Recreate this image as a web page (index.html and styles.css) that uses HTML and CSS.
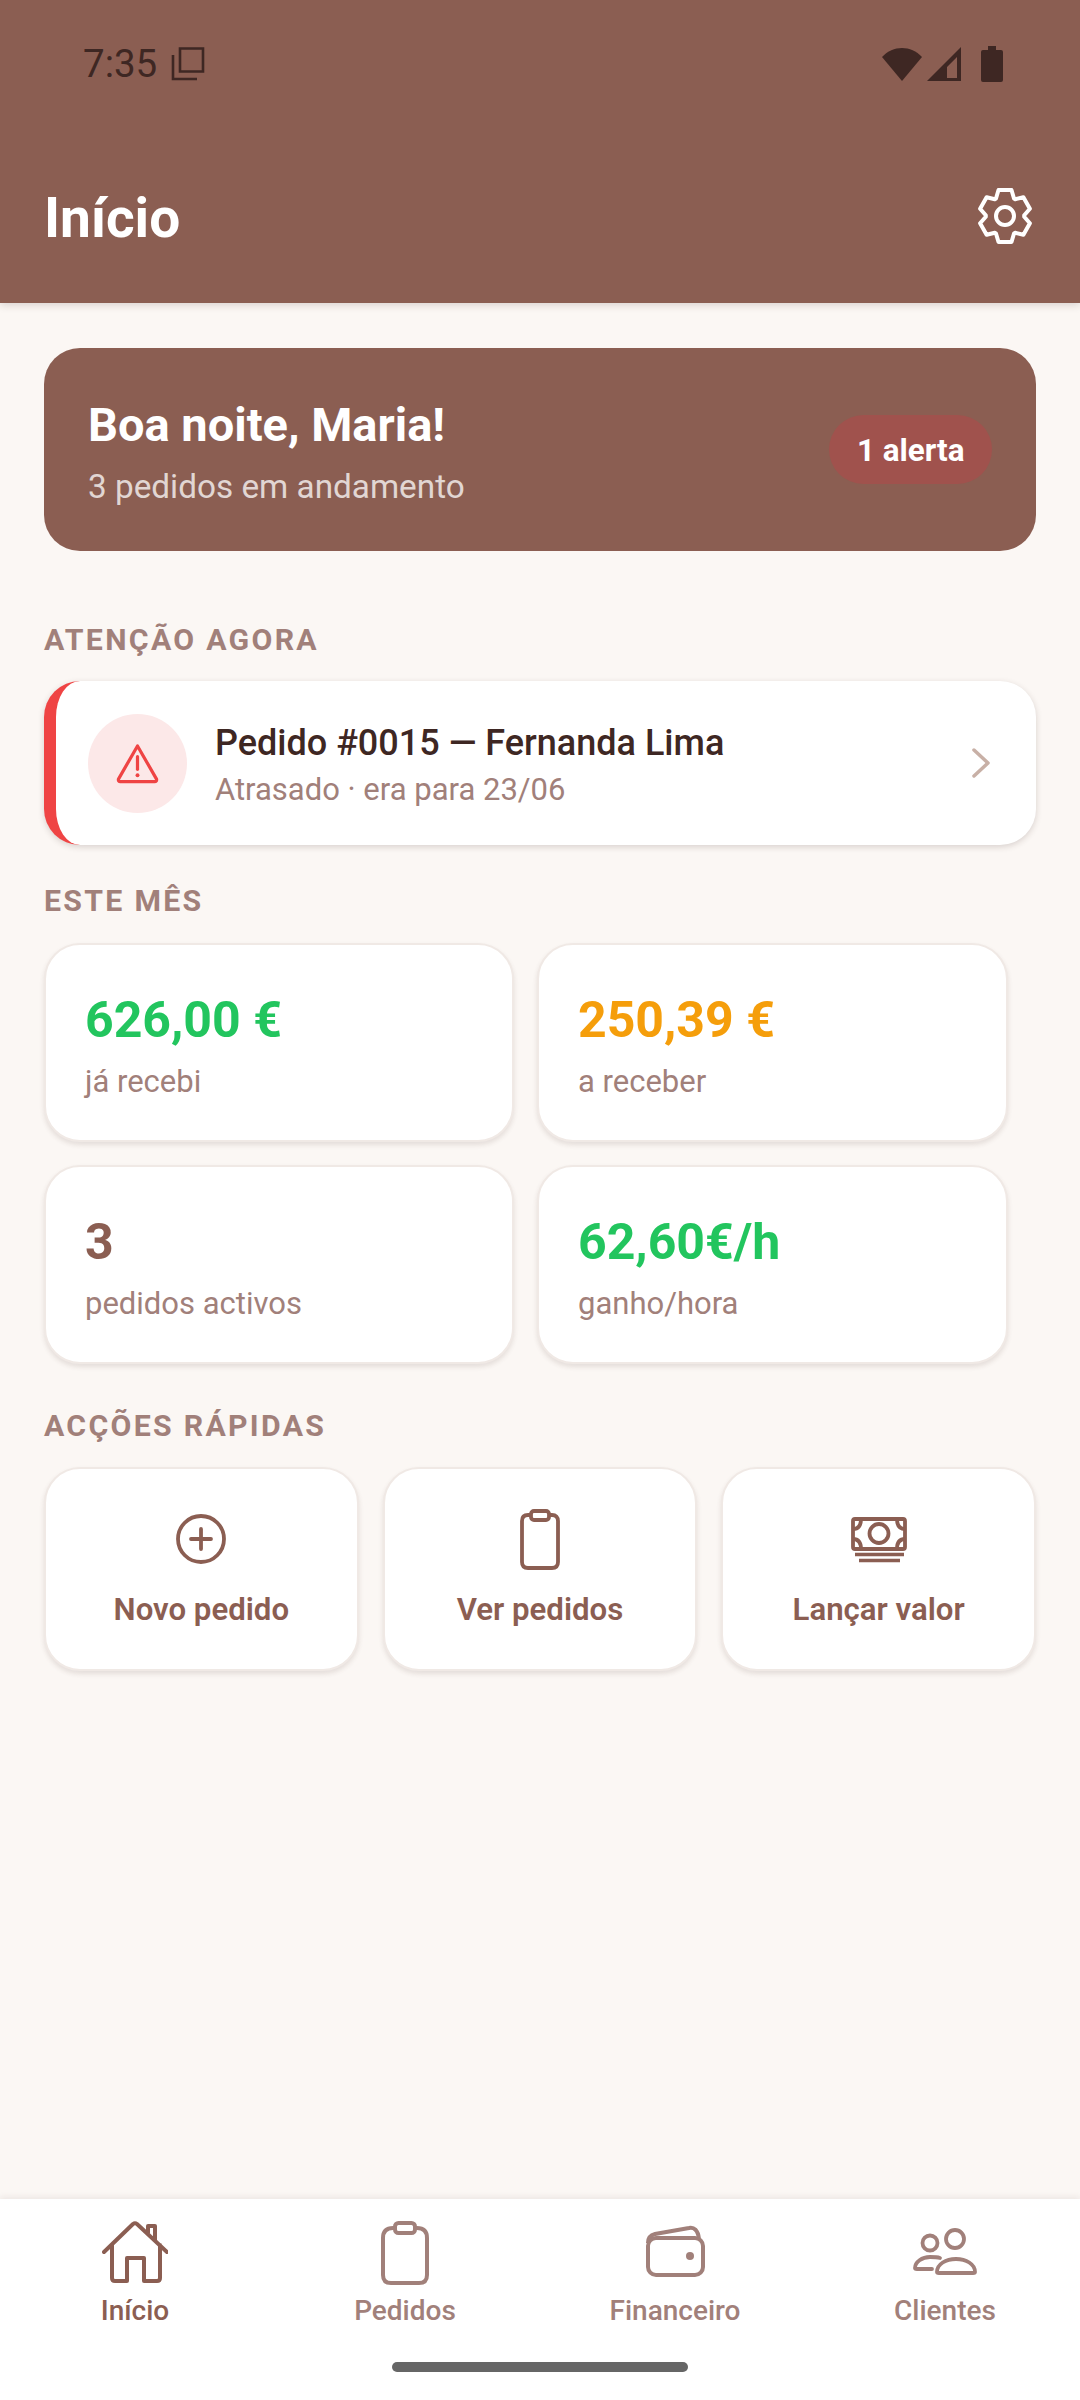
FILE: index.html
```html
<!DOCTYPE html>
<html lang="pt">
<head>
<meta charset="utf-8">
<title>Início</title>
<link rel="stylesheet" href="styles.css">
</head>
<body>
<div class="app">
  <header class="top">
    <div class="status">
      <div class="status-left">
        <span class="clock">7:35</span>
        <svg class="ico-copy" viewBox="0 0 36 36"><path d="M10 2.500H33V25.500H10Z M3 9V33H27" fill="none" stroke="currentColor" stroke-width="2.600"/></svg>
      </div>
      <div class="status-right">
        <svg class="ico-wifi" viewBox="0 0 42 36"><path d="M1 11C12 -1 30 -1 41 11L21 35Z" fill="currentColor"/></svg>
        <svg class="ico-signal" viewBox="0 0 36 36"><path fill-rule="evenodd" d="M35 1V35H1ZM31 11 21 21V32H31Z" fill="currentColor"/></svg>
        <svg class="ico-battery" viewBox="0 0 22 36"><path d="M7 0H15V4H20Q22 4 22 6V34Q22 36 20 36H2Q0 36 0 34V6Q0 4 2 4H7Z" fill="currentColor"/></svg>
      </div>
    </div>
    <div class="appbar">
      <h1 class="title">Início</h1>
      <svg class="ico-gear" viewBox="-30 -30 60 60"><polygon points="-6.500,-26 6.500,-26 9,-17.500 10.200,-16.800 18.400,-18.800 24.900,-7.200 19.200,-0.700 19.200,0.700 24.900,7.200 18.400,18.800 10.200,16.800 9,17.500 6.500,26 -6.500,26 -9,17.500 -10.200,16.800 -18.400,18.800 -24.900,7.200 -19.200,0.700 -19.200,-0.700 -24.900,-7.200 -18.400,-18.800 -10.200,-16.800 -9,-17.500" fill="none" stroke="currentColor" stroke-width="4" stroke-linejoin="round"/><circle r="9" fill="none" stroke="currentColor" stroke-width="4"/></svg>
    </div>
  </header>

  <main class="content">
    <section class="hero">
      <div class="hero-text">
        <div class="hero-title">Boa noite, Maria!</div>
        <div class="hero-sub">3 pedidos em andamento</div>
      </div>
      <span class="badge">1 alerta</span>
    </section>

    <h2 class="section first">ATENÇÃO AGORA</h2>
    <article class="alert-card">
      <div class="alert-circle">
        <svg class="ico-warn" viewBox="0 0 44 42"><path d="M22 3 41.500 37Q42 39.500 39.500 39.500H4.500Q2 39.500 2.500 37Z" fill="none" stroke="currentColor" stroke-width="3.300" stroke-linejoin="round"/><path d="M22 14V27" stroke="currentColor" stroke-width="3.300" stroke-linecap="round"/><circle cx="22" cy="33" r="2" fill="currentColor"/></svg>
      </div>
      <div class="alert-text">
        <div class="alert-title">Pedido #0015 — Fernanda Lima</div>
        <div class="alert-sub">Atrasado · era para 23/06</div>
      </div>
      <svg class="ico-chev" viewBox="0 0 18 30"><path d="M2 2 16 15 2 28" fill="none" stroke="currentColor" stroke-width="3.500" stroke-linecap="round" stroke-linejoin="round"/></svg>
    </article>

    <h2 class="section month">ESTE MÊS</h2>
    <div class="stats">
      <div class="card stat"><div class="stat-value green">626,00 €</div><div class="stat-label">já recebi</div></div>
      <div class="card stat"><div class="stat-value orange">250,39 €</div><div class="stat-label">a receber</div></div>
      <div class="card stat"><div class="stat-value brown">3</div><div class="stat-label">pedidos activos</div></div>
      <div class="card stat"><div class="stat-value green">62,60€/h</div><div class="stat-label">ganho/hora</div></div>
    </div>

    <h2 class="section actions-head">ACÇÕES RÁPIDAS</h2>
    <div class="actions">
      <div class="card action">
        <svg class="ico" viewBox="0 0 66 66"><circle cx="33" cy="33" r="23" fill="none" stroke="currentColor" stroke-width="3.800"/><path d="M33 23V43M23 33H43" stroke="currentColor" stroke-width="3.800" stroke-linecap="round"/></svg>
        <span class="action-label">Novo pedido</span>
      </div>
      <div class="card action">
        <svg class="ico" viewBox="0 0 66 66"><path d="M24 9H21Q15 9 15 15V56Q15 62 21 62H45Q51 62 51 56V15Q51 9 45 9H42" fill="none" stroke="currentColor" stroke-width="3.800"/><rect x="24" y="5" width="18" height="9" rx="3" fill="none" stroke="currentColor" stroke-width="3.800"/></svg>
        <span class="action-label">Ver pedidos</span>
      </div>
      <div class="card action">
        <svg class="ico" viewBox="0 0 66 66"><rect x="7" y="13" width="52" height="30" rx="2" fill="none" stroke="currentColor" stroke-width="3.800"/><circle cx="33" cy="27.500" r="9.500" fill="none" stroke="currentColor" stroke-width="3.800"/><path d="M7 23Q15 23 15 13M59 23Q51 23 51 13M7 33Q15 33 15 43M59 33Q51 33 51 43" fill="none" stroke="currentColor" stroke-width="3.800"/><path d="M9 48.500H58M13 54.500H54" stroke="currentColor" stroke-width="3.400"/></svg>
        <span class="action-label">Lançar valor</span>
      </div>
    </div>
  </main>

  <nav class="nav">
    <div class="tab active">
      <svg class="ico" viewBox="0 0 66 66"><path d="M2 31 31 3Q33 1.500 35 3L65 31M10 24V57Q10 60 13 60H25V37H42V60H55Q58 60 58 57V24M46 12V5H53V19" fill="none" stroke="currentColor" stroke-width="4" stroke-linecap="round" stroke-linejoin="round"/></svg>
      <span class="tab-label">Início</span>
    </div>
    <div class="tab">
      <svg class="ico" viewBox="0 0 66 66"><path d="M24 7H21Q11 7 11 17V54Q11 62 19 62H47Q55 62 55 54V17Q55 7 45 7H42" fill="none" stroke="currentColor" stroke-width="4"/><rect x="23" y="2" width="20" height="10" rx="3.500" fill="none" stroke="currentColor" stroke-width="4"/></svg>
      <span class="tab-label">Pedidos</span>
    </div>
    <div class="tab">
      <svg class="ico" viewBox="0 0 66 66"><rect x="6" y="17" width="55" height="37" rx="8" fill="none" stroke="currentColor" stroke-width="4"/><path d="M6 22C6 17 9 14 13 13L47 7C52 6 56 9 57 18" fill="none" stroke="currentColor" stroke-width="4"/><circle cx="48" cy="35" r="4" fill="currentColor"/></svg>
      <span class="tab-label">Financeiro</span>
    </div>
    <div class="tab">
      <svg class="ico" viewBox="0 0 66 66"><circle cx="43" cy="18" r="9" fill="none" stroke="currentColor" stroke-width="3.800"/><circle cx="18" cy="22" r="7.500" fill="none" stroke="currentColor" stroke-width="3.800"/><path d="M25 51C25 43 34 38 44 38C54 38 63 43 63 51Q63 52 61 52H27Q25 52 25 51Z M28 37C25 36 21 36 18 36C10 36 3 41 3 47Q3 48 5 48H20" fill="none" stroke="currentColor" stroke-width="3.800" stroke-linecap="round"/></svg>
      <span class="tab-label">Clientes</span>
    </div>
    <div class="home-indicator"></div>
  </nav>
</div>
</body>
</html>
```
FILE: styles.css
```css
* { box-sizing: border-box; }
html, body { margin: 0; padding: 0; }
body { font-family: Roboto, "Noto Sans", sans-serif; background: #fbf7f4; color: #3e2723; }
.app { width: 1080px; height: 2400px; display: flex; flex-direction: column; overflow: hidden; }

.top { height: 303px; background: #8b5e52; flex: none; box-shadow: 0 2px 8px rgba(62,39,35,.18); position: relative; z-index: 1; display: flex; flex-direction: column; }
.status { height: 64px; margin-top: 32px; padding: 0 77px 0 83px; display: flex; justify-content: space-between; align-items: center; color: #3e2723; }
.status-left { display: flex; align-items: center; gap: 13px; }
.clock { font-size: 38.500px; line-height: 44px; }
.ico-copy { width: 36px; height: 36px; }
.status-right { display: flex; align-items: center; }
.ico-wifi { width: 42px; height: 36px; }
.ico-signal { width: 36px; height: 36px; margin-left: 3px; }
.ico-battery { width: 22px; height: 36px; margin-left: 19px; }
.appbar { flex: 1; display: flex; justify-content: space-between; align-items: center; padding: 36px 44px 0; color: #fff; }
.title { margin: 0; font-size: 55px; font-weight: 700; line-height: 64px; }
.ico-gear { width: 60px; height: 60px; margin-top: -4px; margin-right: 1px; }

.content { flex: 1; padding: 45px 44px 0; }
.hero { height: 203px; background: #8b5e52; border-radius: 36px; padding: 0 44px; display: flex; justify-content: space-between; align-items: center; color: #fff; }
.hero-text { padding-top: 6px; }
.hero-title { font-size: 47px; font-weight: 700; line-height: 52px; }
.hero-sub { font-size: 33.300px; line-height: 40px; margin-top: 16px; color: rgba(255,255,255,.75); }
.badge { height: 69px; padding: 2px 27.500px 0; border-radius: 35px; background: #a0524d; font-size: 31.400px; font-weight: 700; display: flex; align-items: center; }

.section { margin: 0; font-size: 30.250px; font-weight: 700; letter-spacing: 2.300px; line-height: 36px; color: #a1807a; }
.section.first { padding-top: 71px; padding-bottom: 23px; }
.section.month { padding-top: 38px; padding-bottom: 24px; }
.actions-head { padding-top: 44px; padding-bottom: 23px; }

.alert-card { height: 164px; background: #fff; border-radius: 36px; border-left: 12px solid #ef4444; box-shadow: 0 2px 6px rgba(62,39,35,.18); display: flex; align-items: center; padding: 0 32px; }
.alert-circle { width: 99px; height: 99px; border-radius: 50%; background: #fce8e8; display: flex; align-items: center; justify-content: center; color: #ef4444; flex: none; }
.ico-warn { width: 43px; height: 41px; margin-right: 1px; }
.alert-text { flex: 1; margin-left: 28px; padding-top: 3px; }
.alert-title { font-size: 36px; font-weight: 500; line-height: 44px; }
.alert-sub { font-size: 31px; line-height: 36px; margin-top: 7px; color: #a1807a; }
.ico-chev { width: 18px; height: 30px; color: #c8b0a6; margin-right: 14px; }

.card { background: #fff; border-radius: 36px; border: 2px solid #f0e9e5; box-shadow: 0 3px 5px rgba(62,39,35,.12); }
.stats { display: grid; grid-template-columns: 470px 471px; gap: 23px; }
.stat { height: 199px; padding: 6px 0 0 39px; display: flex; flex-direction: column; justify-content: center; }
.stat-value { font-size: 50px; font-weight: 700; line-height: 58px; }
.stat-label { font-size: 31px; line-height: 36px; margin-top: 15px; color: #a1807a; }
.green { color: #22c55e; }
.orange { color: #f59e0b; }
.brown { color: #8b5e52; }

.actions { display: grid; grid-template-columns: repeat(3, 1fr); gap: 24px; }
.action { height: 204px; display: flex; flex-direction: column; align-items: center; padding-top: 37px; color: #8b5e52; }
.ico { width: 66px; height: 66px; flex: none; }
.action-label { font-size: 31.200px; font-weight: 600; line-height: 36px; margin-top: 20px; }

.nav { height: 201px; background: #fff; flex: none; display: grid; grid-template-columns: repeat(4, 1fr); box-shadow: 0 -2px 6px rgba(62,39,35,.08); position: relative; color: #a1807a; }
.tab { display: flex; flex-direction: column; align-items: center; padding-top: 22px; }
.tab.active { color: #8b5e52; }
.tab-label { font-size: 28px; font-weight: 500; line-height: 34px; margin-top: 7px; }
.home-indicator { position: absolute; left: 392px; top: 163px; width: 296px; height: 10px; border-radius: 5px; background: #666; }
```
